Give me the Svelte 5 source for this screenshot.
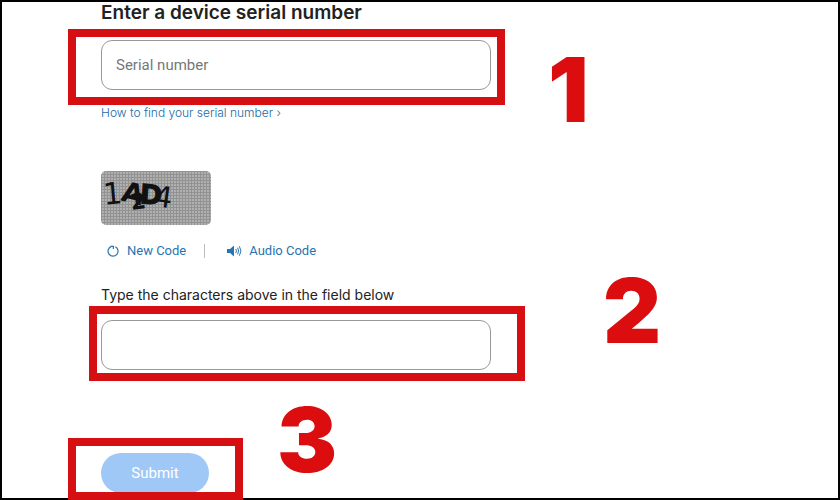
<script>
  let serial = $state('');
  let code = $state('');
</script>

<main>
  <form onsubmit={(e) => e.preventDefault()}>
    <h1><label for="serial">Enter a device serial number</label></h1>
    <div class="field">
      <input id="serial" type="text" placeholder="Serial number" bind:value={serial} />
      <span class="frame first"></span>
      <span class="step one">1</span>
    </div>
    <a class="help" href="#help">How to find your serial number ›</a>

    <svg class="captcha" viewBox="0 0 110 54" role="img" aria-label="Verification code">
      <defs>
        <pattern id="mesh" width="3" height="3" patternUnits="userSpaceOnUse">
          <rect width="3" height="3" fill="#929292" />
          <rect x="1" y="1" width="2" height="2" fill="#b0b0b0" />
        </pattern>
      </defs>
      <rect width="110" height="54" rx="5" fill="url(#mesh)" />
      <g class="glyphs">
        <text x="2" y="33" font-size="30" transform="rotate(-5 10 22)">1</text>
        <text class="bold" x="21" y="32" font-size="28" transform="rotate(14 31 23)">A</text>
        <text class="bold" x="29" y="38" font-size="22" transform="rotate(-8 36 28)">2</text>
        <text class="heavy" x="39" y="33" font-size="27" transform="rotate(4 49 23)">D</text>
        <text x="53" y="36" font-size="29" transform="rotate(8 62 26)">4</text>
      </g>
    </svg>

    <div class="actions">
      <button type="button" class="link">
        <svg width="13" height="14" viewBox="0 0 13 14" aria-hidden="true">
          <path d="M8.3 2.7A5 5 0 1 1 4 2.6M3.4 2.4H6.4V5" fill="none" stroke="currentColor" stroke-width="1.2" />
        </svg>
        New Code
      </button>
      <span class="divider"></span>
      <button type="button" class="link">
        <svg width="15" height="12" viewBox="0 0 15 12" aria-hidden="true">
          <path d="M0 4h3l4-3.5v11L3 8H0z" fill="currentColor" />
          <path d="M8.8 4q1.2 2 0 4M10.6 2.7q2 3.3 0 6.6M12.4 1.3q3 4.7 0 9.4" fill="none" stroke="currentColor" />
        </svg>
        Audio Code
      </button>
    </div>

    <label class="prompt" for="code">Type the characters above in the field below</label>
    <div class="field">
      <input id="code" type="text" bind:value={code} />
      <span class="frame second"></span>
      <span class="step two">2</span>
    </div>

    <div class="submit">
      <button type="submit">Submit</button>
      <span class="frame third"></span>
      <span class="step three">3</span>
    </div>
  </form>
</main>

<style>
  :global(body) {
    margin: 0;
    background: #fff;
  }
  main {
    box-sizing: border-box;
    min-height: 100vh;
    border: 2px solid #000;
    padding: 0 24px 0 99px;
    font-family: Inter, "Liberation Sans", sans-serif;
    color: #222;
  }
  form {
    display: flex;
    flex-direction: column;
    align-items: flex-start;
    max-width: 390px;
  }
  h1 {
    margin: 0 0 16px;
    font-size: 20px;
    line-height: 22px;
    font-weight: 600;
  }
  .field {
    position: relative;
    width: 100%;
  }
  input {
    display: block;
    box-sizing: border-box;
    width: 100%;
    height: 50px;
    padding: 0 14px;
    border: 1px solid #999;
    border-radius: 11px;
    background: #fff;
    font: 15px/20px Roboto, sans-serif;
    color: #222;
  }
  input::placeholder {
    color: #777;
    opacity: 1;
  }
  h1 {
    font-size: 19px;
  }
  .help {
    margin: 15px 0 50px;
    font-size: 12px;
    line-height: 16px;
    font-weight: 300;
    color: #1769a8;
    text-decoration: none;
  }
  .captcha {
    display: block;
    width: 110px;
    height: 54px;
  }
  .glyphs {
    font-family: "DejaVu Sans", sans-serif;
    fill: #111;
  }
  .bold {
    font-weight: 700;
  }
  .heavy {
    font-weight: 700;
    stroke: #111;
    stroke-width: 1;
  }
  .actions {
    display: flex;
    align-items: center;
    margin: 16px 0 25px 6px;
  }
  .link {
    display: flex;
    align-items: center;
    gap: 7px;
    padding: 0;
    border: 0;
    background: none;
    font: 13px/20px Roboto, sans-serif;
    color: #2874b0;
    cursor: pointer;
  }
  .divider {
    width: 1px;
    height: 14px;
    margin: 0 22px 0 18px;
    background: #bbb;
  }
  .prompt {
    margin-bottom: 16px;
    font-size: 14px;
    line-height: 18px;
  }
  .submit {
    position: relative;
    margin-top: 83px;
  }
  .submit button {
    display: block;
    width: 108px;
    height: 40px;
    padding: 0;
    border: 0;
    border-radius: 20px;
    background: #9fc8f7;
    font: 15px/20px Roboto, sans-serif;
    color: #fff;
  }
  .frame {
    position: absolute;
    box-sizing: border-box;
    border: 8px solid #d50f12;
    pointer-events: none;
  }
  .first {
    inset: -11px -14px -15px -33px;
  }
  .second {
    inset: -14px -34px -11px -12px;
  }
  .third {
    inset: -15px -34px -7px -33px;
  }
  .step {
    position: absolute;
    font-size: 90px;
    line-height: 90px;
    font-weight: 900;
    color: #dc0d0e;
    pointer-events: none;
  }
  .one {
    left: 447px;
    top: 5px;
  }
  .two {
    left: 502px;
    top: -54px;
  }
  .three {
    left: 176px;
    top: -58px;
  }
</style>
